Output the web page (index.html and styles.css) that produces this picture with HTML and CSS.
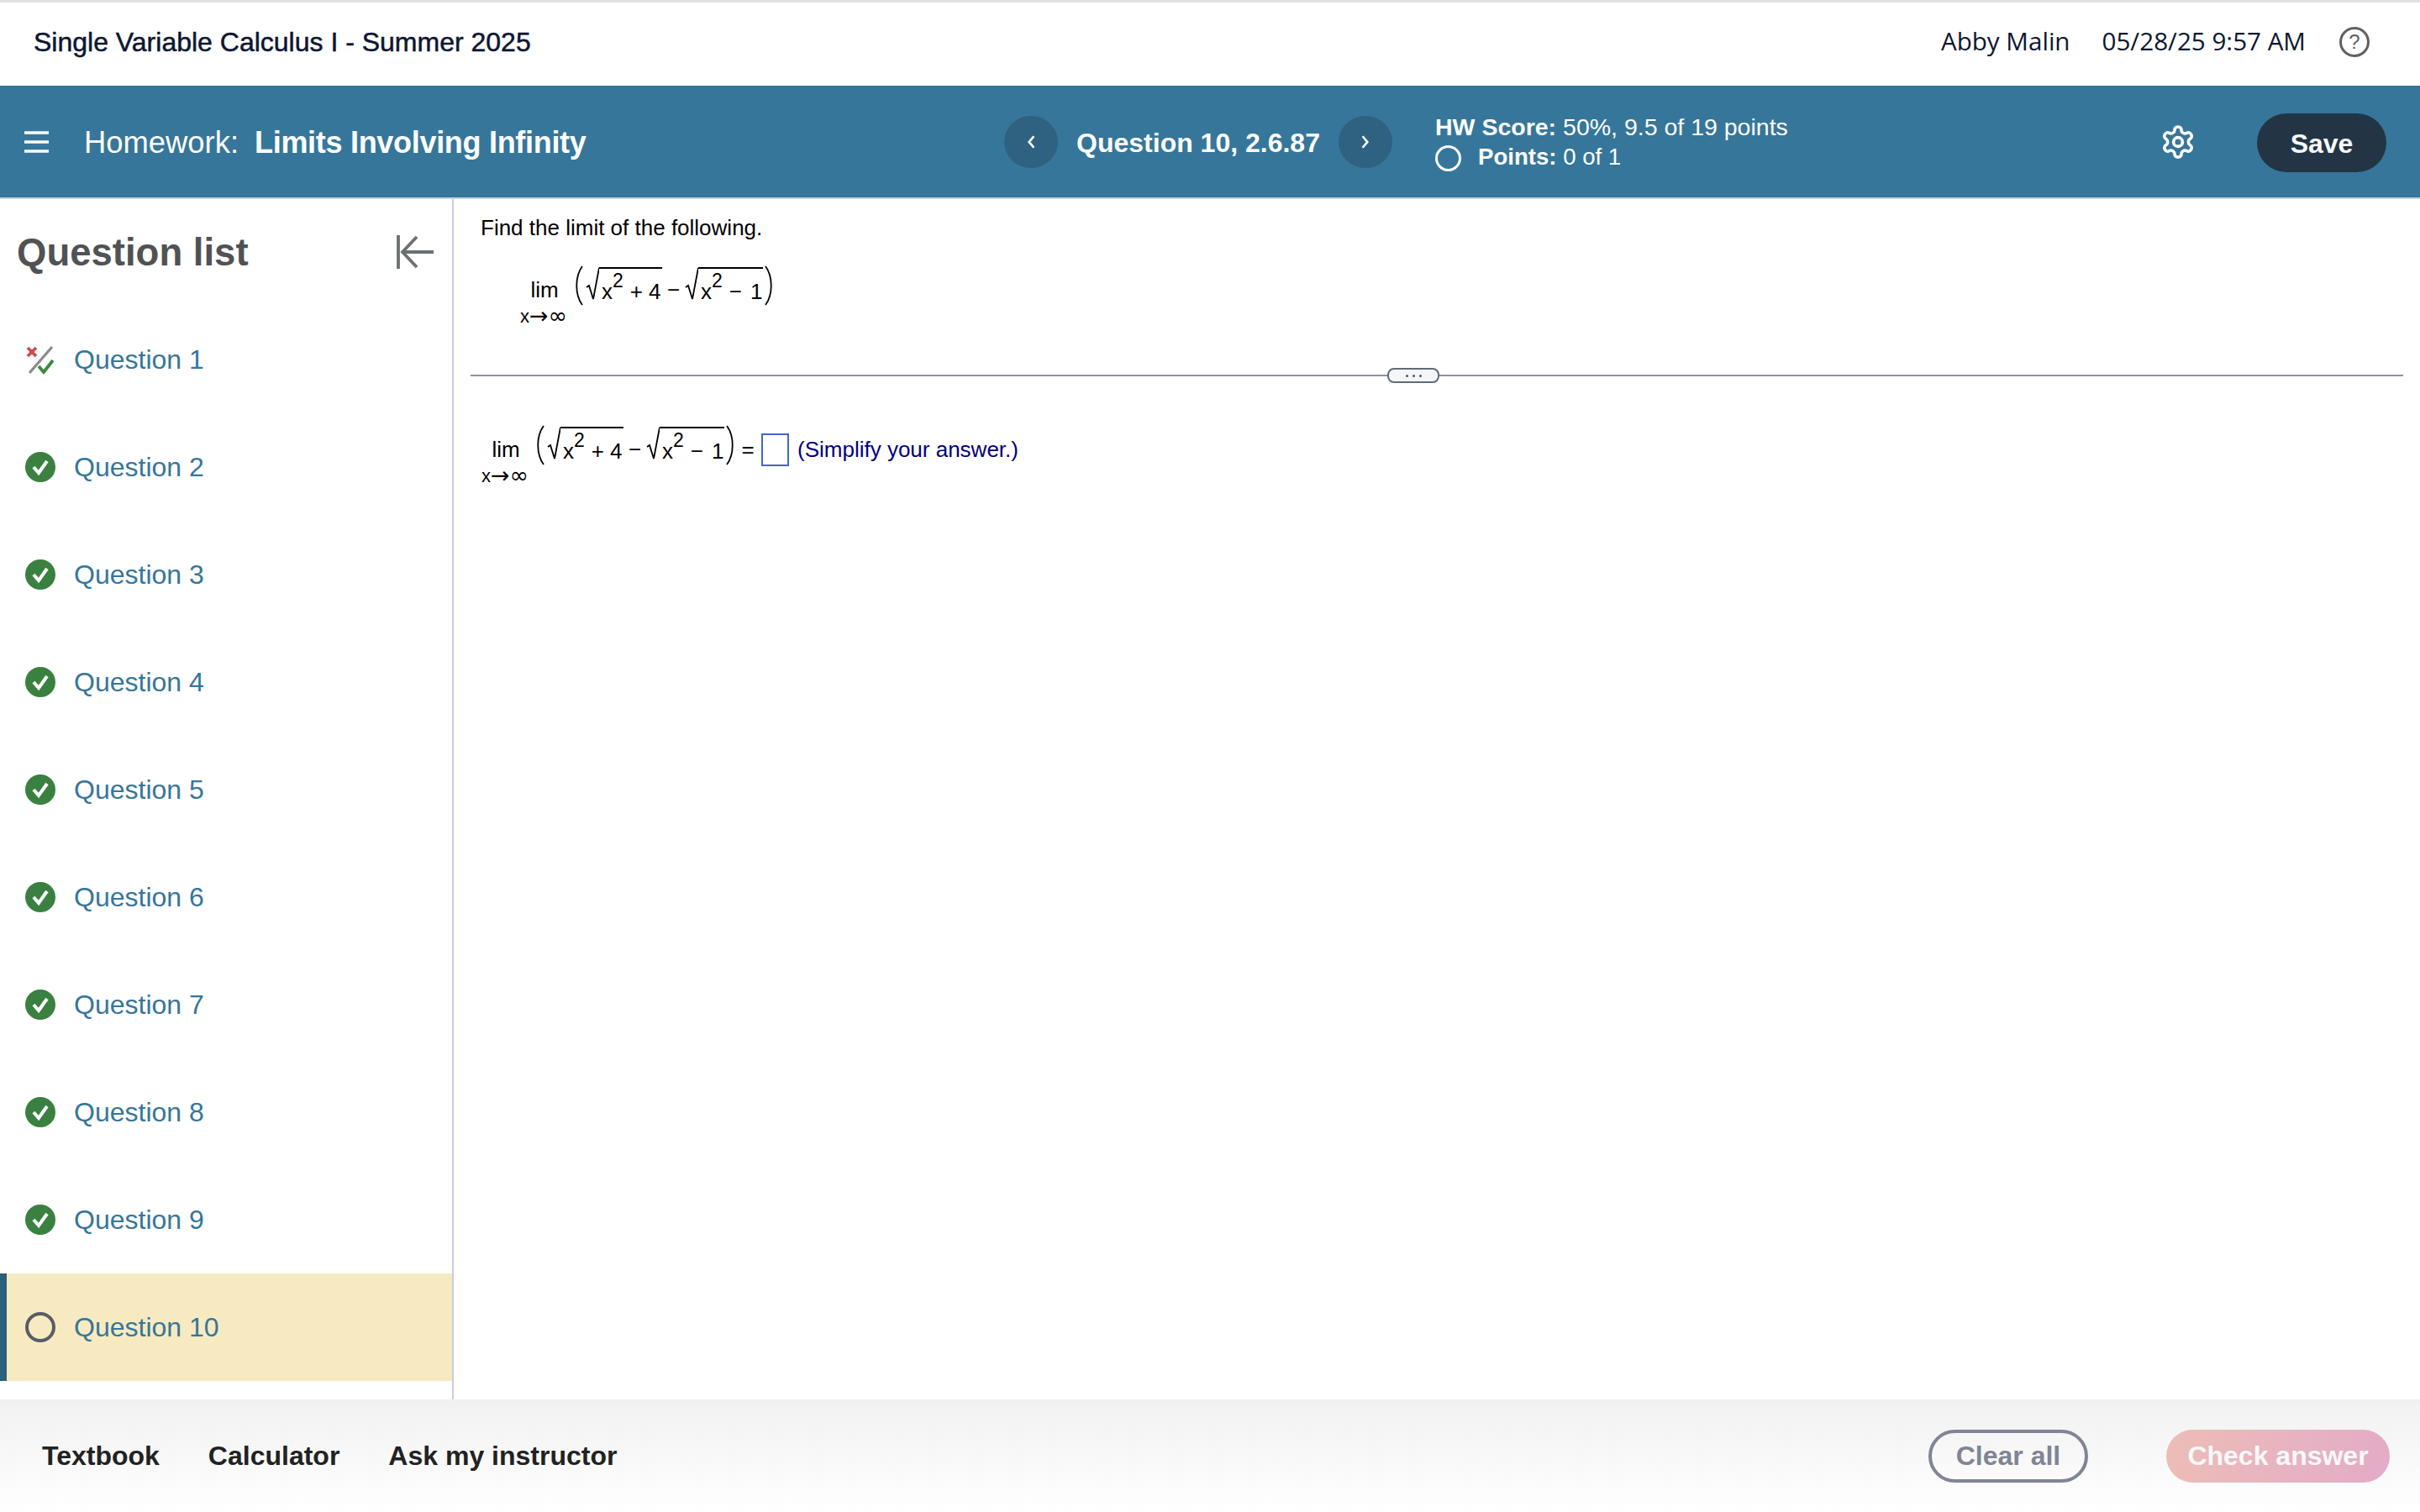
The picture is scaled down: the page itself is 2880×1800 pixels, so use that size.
FILE: index.html
```html
<!DOCTYPE html>
<html lang="en">
<head>
	<meta charset="UTF-8">
	<title>Homework: Limits Involving Infinity</title>
	<link rel="stylesheet" href="styles.css">
</head>
<body>
	<header class="course-bar">
		<div class="course-name">Single Variable Calculus I - Summer 2025</div>
		<div class="student-name">Abby Malin</div>
		<div class="date-time">05/28/25 9:57 AM</div>
		<div class="help-icon">?</div>
	</header>

	<div class="hw-bar">
		<div class="hw-left">
			<svg class="menu-icon" viewBox="0 0 29 26"><path d="M0 2h29M0 13h29M0 24h29" stroke="#fff" stroke-width="3.4"/></svg>
			<span class="hw-label">Homework:</span>
			<span class="hw-title">Limits Involving Infinity</span>
		</div>
		<button class="nav-btn"><svg viewBox="0 0 10 16"><path d="M8 2L3 8l5 6" fill="none" stroke="#fff" stroke-width="2.4"/></svg></button>
		<div class="q-title">Question 10, 2.6.87</div>
		<button class="nav-btn"><svg viewBox="0 0 10 16"><path d="M2 2l5 6-5 6" fill="none" stroke="#fff" stroke-width="2.4"/></svg></button>
		<div class="score">
			<div class="score-line"><b>HW Score:</b> 50%, 9.5 of 19 points</div>
			<div class="points-line"><span class="points-ring"></span><span><b>Points:</b> 0 of 1</span></div>
		</div>
		<svg class="gear-icon" viewBox="2 2 20 20"><path d="M12.22 2h-.44a2 2 0 0 0-2 2v.18a2 2 0 0 1-1 1.73l-.43.25a2 2 0 0 1-2 0l-.15-.08a2 2 0 0 0-2.73.73l-.22.38a2 2 0 0 0 .73 2.73l.15.1a2 2 0 0 1 1 1.72v.51a2 2 0 0 1-1 1.74l-.15.09a2 2 0 0 0-.73 2.73l.22.38a2 2 0 0 0 2.73.73l.15-.08a2 2 0 0 1 2 0l.43.25a2 2 0 0 1 1 1.73V20a2 2 0 0 0 2 2h.44a2 2 0 0 0 2-2v-.18a2 2 0 0 1 1-1.73l.43-.25a2 2 0 0 1 2 0l.15.08a2 2 0 0 0 2.73-.73l.22-.39a2 2 0 0 0-.73-2.73l-.15-.08a2 2 0 0 1-1-1.74v-.5a2 2 0 0 1 1-1.74l.15-.09a2 2 0 0 0 .73-2.73l-.22-.38a2 2 0 0 0-2.73-.73l-.15.08a2 2 0 0 1-2 0l-.43-.25a2 2 0 0 1-1-1.73V4a2 2 0 0 0-2-2z" fill="none" stroke="#fff" stroke-width="2"/><circle cx="12" cy="12" r="3" fill="none" stroke="#fff" stroke-width="2"/></svg>
		<button class="save-btn">Save</button>
	</div>

	<div class="main">
		<aside class="sidebar">
			<div class="side-head">
				<h2>Question list</h2>
				<svg class="collapse-icon" viewBox="0 0 44 40"><path d="M2 0v40M44 20H8M24 2L7 20l17 18" fill="none" stroke="#6b7173" stroke-width="3.8"/></svg>
			</div>
			<ul class="q-list">
				<li class="q-row">
					<svg class="q-icon" viewBox="0 0 36 36"><path d="M3 4l10 10M13 4L3 14" stroke="#cf4b4b" stroke-width="3.8"/><path d="M32 3L5 34" stroke="#8a8a8a" stroke-width="3.2"/><path d="M16 26l6 7 11-14" fill="none" stroke="#3a8a40" stroke-width="3.8"/></svg>
					Question 1
				</li>
				<li class="q-row"><span class="done-icon"><svg viewBox="0 0 36 36"><path d="M10 18l6 7 10-14" fill="none" stroke="#fff" stroke-width="4"/></svg></span>Question 2</li>
				<li class="q-row"><span class="done-icon"><svg viewBox="0 0 36 36"><path d="M10 18l6 7 10-14" fill="none" stroke="#fff" stroke-width="4"/></svg></span>Question 3</li>
				<li class="q-row"><span class="done-icon"><svg viewBox="0 0 36 36"><path d="M10 18l6 7 10-14" fill="none" stroke="#fff" stroke-width="4"/></svg></span>Question 4</li>
				<li class="q-row"><span class="done-icon"><svg viewBox="0 0 36 36"><path d="M10 18l6 7 10-14" fill="none" stroke="#fff" stroke-width="4"/></svg></span>Question 5</li>
				<li class="q-row"><span class="done-icon"><svg viewBox="0 0 36 36"><path d="M10 18l6 7 10-14" fill="none" stroke="#fff" stroke-width="4"/></svg></span>Question 6</li>
				<li class="q-row"><span class="done-icon"><svg viewBox="0 0 36 36"><path d="M10 18l6 7 10-14" fill="none" stroke="#fff" stroke-width="4"/></svg></span>Question 7</li>
				<li class="q-row"><span class="done-icon"><svg viewBox="0 0 36 36"><path d="M10 18l6 7 10-14" fill="none" stroke="#fff" stroke-width="4"/></svg></span>Question 8</li>
				<li class="q-row"><span class="done-icon"><svg viewBox="0 0 36 36"><path d="M10 18l6 7 10-14" fill="none" stroke="#fff" stroke-width="4"/></svg></span>Question 9</li>
				<li class="q-row active"><span class="todo-icon"></span>Question 10</li>
			</ul>
		</aside>

		<section class="content">
			<p class="prompt">Find the limit of the following.</p>
			<div class="limit first">
				<div class="lim-col"><span class="lim">lim</span><span class="lim-to">x<span class="sym">→∞</span></span></div>
				<svg class="paren" viewBox="0 0 12 48"><path d="M10 1C1 13 1 35 10 47" fill="none" stroke="#000" stroke-width="1.8"/></svg>
				<svg class="radical" viewBox="0 0 16 40"><path d="M1 24l3-2 5 16 7-37" fill="none" stroke="#000" stroke-width="1.8"/></svg>
				<span class="root">x<sup>2</sup><span class="plus">+</span>4</span>
				<span class="minus">−</span>
				<svg class="radical" viewBox="0 0 16 40"><path d="M1 24l3-2 5 16 7-37" fill="none" stroke="#000" stroke-width="1.8"/></svg>
				<span class="root">x<sup>2</sup><span class="minus-in">−</span>1</span>
				<svg class="paren" viewBox="0 0 12 48"><path d="M2 1c9 12 9 34 0 46" fill="none" stroke="#000" stroke-width="1.8"/></svg>
			</div>

			<div class="divider">
				<div class="rule rule-left"></div>
				<div class="handle"><i></i><i></i><i></i></div>
				<div class="rule rule-right"></div>
			</div>

			<div class="limit second">
				<div class="lim-col"><span class="lim">lim</span><span class="lim-to">x<span class="sym">→∞</span></span></div>
				<svg class="paren" viewBox="0 0 12 48"><path d="M10 1C1 13 1 35 10 47" fill="none" stroke="#000" stroke-width="1.8"/></svg>
				<svg class="radical" viewBox="0 0 16 40"><path d="M1 24l3-2 5 16 7-37" fill="none" stroke="#000" stroke-width="1.8"/></svg>
				<span class="root">x<sup>2</sup><span class="plus">+</span>4</span>
				<span class="minus">−</span>
				<svg class="radical" viewBox="0 0 16 40"><path d="M1 24l3-2 5 16 7-37" fill="none" stroke="#000" stroke-width="1.8"/></svg>
				<span class="root">x<sup>2</sup><span class="minus-in">−</span>1</span>
				<svg class="paren" viewBox="0 0 12 48"><path d="M2 1c9 12 9 34 0 46" fill="none" stroke="#000" stroke-width="1.8"/></svg>
				<span class="equals">=</span>
				<span class="answer-box"></span>
				<span class="hint">(Simplify your answer.)</span>
			</div>
		</section>
	</div>

	<footer class="tool-bar">
		<a class="tool-link">Textbook</a>
		<a class="tool-link">Calculator</a>
		<a class="tool-link">Ask my instructor</a>
		<button class="clear-btn">Clear all</button>
		<button class="check-btn">Check answer</button>
	</footer>
</body>
</html>
```

FILE: styles.css
```css
*{margin:0;padding:0;box-sizing:border-box}
html,body{height:100%}
body{
	display:flex;
	flex-direction:column;
	height:1800px;
	font-family:"Liberation Sans",Arial,sans-serif;
	background:#fff;
	overflow:hidden;
}
button{font-family:inherit;cursor:pointer;border:0}

/* top course bar */
.course-bar{
	flex:none;
	height:102px;
	border-top:3px solid #e2e2e2;
	padding:0 60px 5px 40px;
	display:flex;
	align-items:center;
	color:#0d1630;
}
.course-name{
	font-size:32px;
	-webkit-text-stroke:0.5px #0d1630;
	flex:1;
}
.student-name,.date-time{
	font-family:"Open Sans",sans-serif;
	font-size:29.6px;
	margin-top:-3px;
}
.date-time{margin-left:38px}
.help-icon{
	width:36px;
	height:36px;
	margin-left:40px;
	border:3px solid #5f6163;
	border-radius:50%;
	color:#5f6163;
	font-size:24px;
	line-height:30px;
	text-align:center;
}

/* blue homework bar */
.hw-bar{
	flex:none;
	height:135px;
	background:#36769a;
	border-bottom:2px solid #c9d2e2;
	padding:3px 40px 0 29px;
	display:flex;
	align-items:center;
	color:#fff;
}
.hw-left{
	width:1166px;
	flex:none;
	display:flex;
	align-items:center;
}
.menu-icon{width:29px;height:26px;margin-right:42px;margin-top:-3px}
.hw-label{font-size:36.4px;margin-right:19px}
.hw-title{font-size:36px;font-weight:bold;letter-spacing:-0.3px}
.nav-btn{
	width:64px;
	height:62px;
	border-radius:50%;
	background:#2f6280;
	display:flex;
	align-items:center;
	justify-content:center;
	margin-top:-3px;
}
.nav-btn svg{width:12px;height:18px}
.q-title{
	width:334px;
	text-align:center;
	font-size:32px;
	font-weight:bold;
}
.score{margin-left:51px;font-size:28.5px;margin-top:-2px}
.score-line{line-height:36px}
.points-line{display:flex;align-items:center;line-height:36px;font-size:27.6px}
.points-ring{
	width:31px;
	height:31px;
	border:3px solid #fff;
	border-radius:50%;
	margin-right:20px;
	margin-top:3px;
}
.gear-icon{width:36px;height:36px;margin-left:auto;margin-right:76px;overflow:visible;margin-top:-3px}
.save-btn{
	width:154px;
	height:70px;
	border-radius:35px;
	background:#233545;
	color:#f6f7fb;
	font-size:32px;
	font-weight:bold;
	padding-top:3px;
}

/* middle area */
.main{flex:1;min-height:0;display:flex}
.sidebar{
	flex:none;
	width:540px;
	border-right:2px solid #c9cde0;
}
.side-head{
	height:127px;
	padding:0 22px 0 20px;
	display:flex;
	align-items:center;
	justify-content:space-between;
}
.side-head h2{
	font-size:45.5px;
	font-weight:bold;
	color:#505254;
	margin-top:1px;
}
.collapse-icon{width:44px;height:40px;margin-top:-2px}
.q-list{list-style:none}
.q-row{
	height:128px;
	padding-left:30px;
	display:flex;
	align-items:center;
	font-size:32px;
	color:#36769a;
}
.q-row.active{
	background:#f8eac0;
	border-left:8px solid #2a5f7d;
	padding-left:22px;
}
.q-icon,.done-icon,.todo-icon{
	flex:none;
	width:36px;
	height:36px;
	margin-right:22px;
}
.done-icon{
	border-radius:50%;
	background:#3a8040;
}
.done-icon svg{display:block;width:36px;height:36px}
.todo-icon{
	border:4px solid #555e66;
	border-radius:50%;
}

.content{
	flex:1;
	padding:19px 20px 0 20px;
	font-size:26px;
	color:#000;
}
.prompt{line-height:30px;margin-left:12px}

/* limit expressions */
.limit{display:flex;align-items:flex-start}
.limit.first{margin-top:30px;margin-left:58px}
.limit.second{margin-top:50px;margin-left:12px}
.lim-col{
	width:58px;
	display:flex;
	flex-direction:column;
	align-items:center;
	padding-top:14px;
}
.lim{line-height:30px;margin-left:2px}
.lim-to{line-height:24px;font-size:22px;margin-top:5px;white-space:nowrap}
.lim-to .sym{font-family:"DejaVu Sans",sans-serif;font-size:27px;line-height:0;vertical-align:-1px}
.paren{width:12px;height:48px;flex:none;margin-left:7px}
.paren + .radical{margin-top:2px;margin-left:2px}
.root + .paren{margin-left:1px}
.radical{width:16px;height:40px;flex:none}
.root{
	border-top:2px solid #000;
	height:38px;
	margin-top:2px;
	padding-left:3px;
	line-height:54px;
	white-space:nowrap;
	width:75px;
}
.root sup{font-size:23px;line-height:0;vertical-align:14px}
.plus{margin:0 7px 0 8px}
.minus-in{margin:0 10px 0 8px}
.minus{width:27px;line-height:58px;text-align:center;flex:none}
.minus + .radical{margin-top:2px}
.root + .minus + .radical + .root{width:77px}
.equals{margin-left:5px;width:20px;line-height:58px;text-align:center}
.answer-box{
	width:33px;
	height:39px;
	margin-top:10px;
	margin-left:6px;
	border:2px solid #3f67c4;
	flex:none;
}
.hint{margin-left:10px;color:#000080;line-height:58px;white-space:nowrap}

.divider{
	display:flex;
	align-items:center;
	height:18px;
	margin-top:49px;
}
.rule{height:2px;background:#8a93a3}
.rule-left{width:1091px}
.rule-right{flex:1}
.handle{
	width:62px;
	height:18px;
	flex:none;
	background:#f5f6f8;
	border:2px solid #5f6b7a;
	border-radius:8px;
	display:flex;
	align-items:center;
	justify-content:center;
	gap:5px;
}
.handle i{width:3px;height:3px;border-radius:50%;background:#4a5361}

/* bottom tools */
.tool-bar{
	flex:none;
	height:134px;
	background:linear-gradient(#f1f1f1,#fff);
	padding:0 36px 0 50px;
	display:flex;
	align-items:center;
}
.tool-link{
	font-size:32px;
	font-weight:bold;
	color:#222;
	margin-right:58px;
}
.clear-btn,.check-btn{
	height:63px;
	border-radius:32px;
	font-size:32px;
	font-weight:bold;
}
.clear-btn{
	width:190px;
	margin-left:auto;
	background:transparent;
	border:4px solid #7f8596;
	color:#7f8596;
}
.check-btn{
	width:266px;
	margin-left:93px;
	background:linear-gradient(100deg,#edbdb7,#e3abc8);
	color:#f8f8fa;
}
```
